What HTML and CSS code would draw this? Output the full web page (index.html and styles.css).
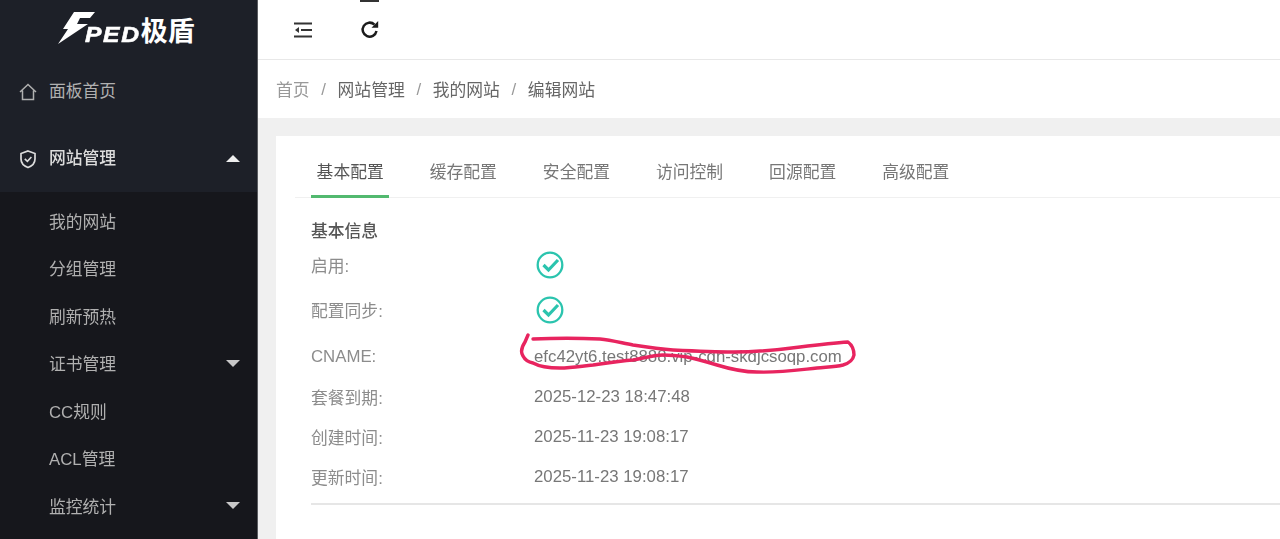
FILE: index.html
```html
<!DOCTYPE html>
<html lang="zh-CN">
<head>
<meta charset="utf-8">
<title>编辑网站</title>
<link rel="stylesheet" href="styles.css">
</head>
<body>
<div class="app">
  <aside class="sidebar">
    <div class="logo">
      <svg class="logo-bolt" viewBox="0 0 38 34" width="38" height="34"><path d="M16 1H37L32 7H22L19 13H30L0 33L10 18H5Z" fill="#fff"/></svg>
      <span class="logo-latin">PED</span><span class="logo-cjk">极盾</span>
    </div>
    <nav>
      <a class="nav-item">
        <svg class="nav-icon" viewBox="0 0 20 20"><path d="M2 10 10 2.5 18 10M4.5 8.5V17.5H15.5V8.5" fill="none" stroke="currentColor" stroke-width="1.5"/></svg>
        <span>面板首页</span>
      </a>
      <a class="nav-item active">
        <svg class="nav-icon" viewBox="0 0 20 20"><path d="M10 2 17 4.5V10C17 14 14 17 10 18.5 6 17 3 14 3 10V4.5Z" fill="none" stroke="currentColor" stroke-width="1.7"/><path d="M6.8 9.8 9.4 12.3 13.4 8" fill="none" stroke="currentColor" stroke-width="1.6"/></svg>
        <span>网站管理</span>
        <i class="caret up"></i>
      </a>
      <div class="submenu">
        <a class="sub-item"><span>我的网站</span></a>
        <a class="sub-item"><span>分组管理</span></a>
        <a class="sub-item"><span>刷新预热</span></a>
        <a class="sub-item"><span>证书管理</span><i class="caret"></i></a>
        <a class="sub-item"><span>CC规则</span></a>
        <a class="sub-item"><span>ACL管理</span></a>
        <a class="sub-item"><span>监控统计</span><i class="caret"></i></a>
      </div>
    </nav>
  </aside>
  <main class="main">
    <header class="topbar">
      <svg class="tool-icon" viewBox="0 0 20 16"><path d="M1 1.5H19M8 8H19M1 14.5H19" stroke="#333" stroke-width="1.9" fill="none"/><path d="M6 5 2 8 6 11Z" fill="#333"/></svg>
      <svg class="tool-icon refresh" viewBox="0 0 20 20"><path d="M16.5 11A7 7 0 1 1 14.5 4.6" stroke="#1c1c1c" stroke-width="2.5" fill="none"/><path d="M11.5 7.8H18.2V1Z" fill="#1c1c1c"/></svg>
      <i class="top-mark"></i>
    </header>
    <div class="crumbs">
      <span class="first">首页</span><b>/</b><span>网站管理</span><b>/</b><span>我的网站</span><b>/</b><span>编辑网站</span>
    </div>
    <section class="card">
      <div class="tabs">
        <a class="tab active">基本配置</a>
        <a class="tab">缓存配置</a>
        <a class="tab">安全配置</a>
        <a class="tab">访问控制</a>
        <a class="tab">回源配置</a>
        <a class="tab">高级配置</a>
      </div>
      <div class="panel">
        <h2>基本信息</h2>
        <div class="row r-check"><label>启用:</label>
          <svg class="check" viewBox="0 0 28 28"><circle cx="14" cy="14" r="12.3" fill="none" stroke="#2bc4ae" stroke-width="2.3"/><path d="M7.5 14 12.5 19 22 9" fill="none" stroke="#2bc4ae" stroke-width="3.2"/></svg>
        </div>
        <div class="row r-check"><label>配置同步:</label>
          <svg class="check" viewBox="0 0 28 28"><circle cx="14" cy="14" r="12.3" fill="none" stroke="#2bc4ae" stroke-width="2.3"/><path d="M7.5 14 12.5 19 22 9" fill="none" stroke="#2bc4ae" stroke-width="3.2"/></svg>
        </div>
        <div class="row r-cname"><label class="latin">CNAME:</label><span>efc42yt6.test8888.vip-cdn-skdjcsoqp.com</span></div>
        <div class="row"><label>套餐到期:</label><span>2025-12-23 18:47:48</span></div>
        <div class="row"><label>创建时间:</label><span>2025-11-23 19:08:17</span></div>
        <div class="row"><label>更新时间:</label><span>2025-11-23 19:08:17</span></div>
        <hr>
      </div>
    </section>
  </main>
  <svg class="scribble" viewBox="0 0 1280 539" width="1280" height="539"><path d="M528 335 525 342C521 348 521 353 523 356 525 360 528 362 533 363 542 368 552 368 560 368 572 368 582 366 593 365 607 363 620 361 633 360 644 358 654 355 663 355 672 355 680 356 687 357 697 359 707 362 717 365 730 369 743 372 757 372 778 373 798 370 817 368 826 367 835 367 843 365 850 363 853 360 854 355 854 350 852 345 848 342 832 343 816 345 800 347 778 350 755 352 733 352 713 352 693 351 673 350 659 349 646 347 633 345 622 343 611 340 600 339 578 338 556 338 533 339" fill="none" stroke="#e8245f" stroke-width="3.4" stroke-linecap="round" stroke-linejoin="round"/></svg>
</div>
</body>
</html>
```
FILE: styles.css
```css
* { box-sizing: border-box; }
html, body { margin: 0; height: 100%; overflow: hidden; }
body {
  font-family: "Liberation Sans", "Noto Sans CJK SC", sans-serif;
  font-size: 16.8px;
  color: #666;
  background: #f0f0f0;
}
.app { position: relative; display: flex; width: 1280px; height: 539px; overflow: hidden; filter: blur(0.35px); }

.sidebar { flex: 0 0 258px; background: #1d2028; border-right: 1px solid #5a5c60; color: #b0b0b0; }
.logo { height: 58px; display: flex; align-items: center; padding: 0 0 0 58px; color: #fff; }
.logo-bolt { margin-right: -11px; margin-top: -3px; flex: none; }
.logo-latin { font: italic 900 22px/1 "Liberation Sans", sans-serif; letter-spacing: 1.5px; margin-top: 11px; -webkit-text-stroke: 0.6px #fff; transform: scaleX(1.12); transform-origin: left center; margin-right: 6px; }
.logo-cjk { font: 700 27px/1 "Noto Sans CJK SC", sans-serif; margin-left: 0; }

.nav-item { height: 67px; display: flex; align-items: center; padding-left: 18px; }
.nav-item span { padding-bottom: 3px; }
.nav-icon { width: 20px; height: 20px; margin-right: 11px; flex: none; }
.nav-item.active { color: #dcdcdc; font-weight: 500; }
.submenu { background: #16171c; height: 347px; padding-top: 5px; }
.sub-item { height: 47.5px; display: flex; align-items: center; padding-left: 49px; }
.caret { margin-left: auto; margin-right: 17px; width: 0; height: 0; border-left: 7.5px solid transparent; border-right: 7.5px solid transparent; border-top: 7px solid #c8c8c8; }
.caret.up { border-top: 0; border-bottom: 7px solid #eee; }

.main { flex: 1; min-width: 0; display: flex; flex-direction: column; }
.topbar { position: relative; height: 60px; flex: none; background: #fff; border-bottom: 1px solid #e8e8e8; display: flex; align-items: center; padding-left: 35px; gap: 47px; }
.tool-icon { width: 20px; height: 16px; flex: none; }
.tool-icon.refresh { width: 20px; height: 20px; }
.top-mark { position: absolute; left: 102px; top: 0; width: 19px; height: 1.5px; background: #333; }

.crumbs { height: 58px; flex: none; background: #fff; display: flex; align-items: center; padding-left: 18px; color: #666; }
.crumbs .first { color: #999; }
.crumbs b { font-weight: 400; color: #999; width: 28px; text-align: center; padding-top: 2px; }

.card { flex: 1; margin: 18px 0 0 18px; background: #fff; padding: 0 0 0 19px; }
.tabs { display: flex; height: 62px; padding-left: 16px; border-bottom: 1px solid #f0f0f0; }
.tab { height: 62px; padding: 21px 5.6px 0; margin-right: 34.8px; color: #777; line-height: 32px; white-space: nowrap; }
.tab.active { color: #555; border-bottom: 3px solid #52b96f; }

.panel { padding: 21px 0 0 16px; }
h2 { margin: 0 0 -1px; font-size: 16.8px; line-height: 25px; font-weight: 500; color: #555; }
.row { display: flex; align-items: center; height: 40px; }
.row.r-check { height: 44.5px; }
.row.r-cname { height: 40px; margin-top: 5px; }
.row label { flex: 0 0 223px; color: #8c8c8c; }
.row span { color: #777; }
.check { width: 28px; height: 28px; margin-left: 2px; }
hr { border: 0; border-top: 2px solid #e6e6e6; margin: 6px 0 0; }

.scribble { position: absolute; left: 0; top: 0; pointer-events: none; }
```
